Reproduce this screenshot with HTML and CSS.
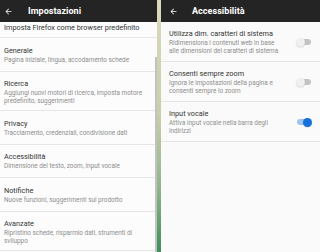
FILE: index.html
```html
<!DOCTYPE html>
<html lang="it">
<head>
<meta charset="utf-8">
<title>Impostazioni</title>
<link rel="stylesheet" href="styles.css">
</head>
<body>
<div class="screen">
  <section class="panel panel-left">
    <header class="bar bar-left">
      <svg class="back" viewBox="0 0 24 24" width="9" height="9"><path d="M20 11H7.83l5.59-5.59L12 4l-8 8 8 8 1.41-1.41L7.83 13H20v-2z" fill="#fff"/></svg>
      <span class="bar-title">Impostazioni</span>
    </header>
    <div class="list list-left">
      <div class="item item-first"><div class="t">Imposta Firefox come browser predefinito</div></div>
      <div class="item"><div class="t">Generale</div><div class="s">Pagina iniziale, lingua, accodamento schede</div></div>
      <div class="item"><div class="t">Ricerca</div><div class="s">Aggiungi nuovi motori di ricerca, imposta motore predefinito, suggerimenti</div></div>
      <div class="item"><div class="t">Privacy</div><div class="s">Tracciamento, credenziali, condivisione dati</div></div>
      <div class="item"><div class="t">Accessibilità</div><div class="s">Dimensione del testo, zoom, input vocale</div></div>
      <div class="item"><div class="t">Notifiche</div><div class="s">Nuove funzioni, suggerimenti sul prodotto</div></div>
      <div class="item"><div class="t">Avanzate</div><div class="s">Ripristino schede, risparmio dati, strumenti di sviluppo</div></div>
    </div>
    <div class="scrollbar"></div>
  </section>
  <div class="strip"></div>
  <section class="panel panel-right">
    <header class="bar bar-right">
      <svg class="back" viewBox="0 0 24 24" width="9" height="9"><path d="M20 11H7.83l5.59-5.59L12 4l-8 8 8 8 1.41-1.41L7.83 13H20v-2z" fill="#fff"/></svg>
      <span class="bar-title">Accessibilità</span>
    </header>
    <div class="list list-right">
      <div class="row">
        <div class="text"><div class="t">Utilizza dim. caratteri di sistema</div><div class="s">Ridimensiona i contenuti web in base alle dimensioni dei caratteri di sistema</div></div>
        <div class="toggle"><span class="track"></span><span class="thumb"></span></div>
      </div>
      <div class="row">
        <div class="text"><div class="t">Consenti sempre zoom</div><div class="s">Ignora le impostazioni della pagina e consenti sempre lo zoom</div></div>
        <div class="toggle"><span class="track"></span><span class="thumb"></span></div>
      </div>
      <div class="row">
        <div class="text"><div class="t">Input vocale</div><div class="s">Attiva input vocale nella barra degli indirizzi</div></div>
        <div class="toggle toggle-on"><span class="track"></span><span class="thumb"></span></div>
      </div>
    </div>
  </section>
</div>
</body>
</html>
```
FILE: styles.css
```css
html, body {
  margin: 0;
  padding: 0;
}
body {
  width: 320px;
  height: 252px;
  overflow: hidden;
  font-family: Roboto, "Noto Sans", sans-serif;
  background: #fafafa;
}
.screen {
  display: flex;
  width: 320px;
  height: 252px;
}
.panel {
  position: relative;
  display: flex;
  flex-direction: column;
  height: 252px;
  overflow: hidden;
}
.panel-left {
  width: 157px;
  background: #fcfcfc;
}
.panel-right {
  width: 159px;
  background: #fafafa;
}
.strip {
  width: 4px;
  height: 252px;
  background: linear-gradient(to bottom, #ddd9bd 0%, #c9cfa8 45%, #8fb58a 75%, #3f8f58 100%);
}
.bar {
  flex: none;
  height: 22px;
  display: flex;
  align-items: center;
  background: #242424;
  color: #fff;
}
.bar-left {
  padding-left: 4px;
}
.bar-right {
  padding-left: 8px;
}
.back {
  display: block;
  flex: none;
}
.bar-title {
  margin-left: 15px;
  font-size: 9px;
  font-weight: 700;
  line-height: 11px;
  letter-spacing: 0.05px;
}
.bar-right .bar-title {
  margin-left: 14px;
}
.list {
  flex: 1;
}
.item {
  box-sizing: border-box;
  min-height: 33.5px;
  padding: 7.5px 4px 5px 4px;
  border-bottom: 1px solid #e6e6e6;
}
.item-first {
  min-height: 0;
  padding: 0.5px 4px 4.5px 4px;
}
.t {
  font-size: 7.3px;
  line-height: 10px;
  color: #353535;
}
.s {
  font-size: 6.4px;
  line-height: 8px;
  color: #8e8e8e;
}
.scrollbar {
  position: absolute;
  left: 155px;
  top: 57px;
  bottom: 0;
  width: 2px;
  background: #c2c2c2;
}
.row {
  display: flex;
  align-items: center;
  padding: 7px 8px 6px 8px;
  border-bottom: 1px solid #e6e6e6;
}
.text {
  flex: 1;
  min-width: 0;
}
.toggle {
  position: relative;
  flex: none;
  width: 16px;
  height: 10px;
  margin-left: 12px;
}
.track {
  position: absolute;
  left: 3px;
  right: 1px;
  top: 2px;
  height: 6px;
  border-radius: 3px;
  background: #c4c4c4;
}
.thumb {
  position: absolute;
  left: 0;
  top: 0.5px;
  width: 9px;
  height: 9px;
  border-radius: 50%;
  background: #f0f0f0;
  box-shadow: 0 0.5px 1px rgba(0, 0, 0, 0.2);
}
.toggle-on .track {
  left: 1px;
  right: 3px;
  background: #9fc4ef;
}
.toggle-on .thumb {
  left: auto;
  right: 0;
  background: #1670dc;
}
```
